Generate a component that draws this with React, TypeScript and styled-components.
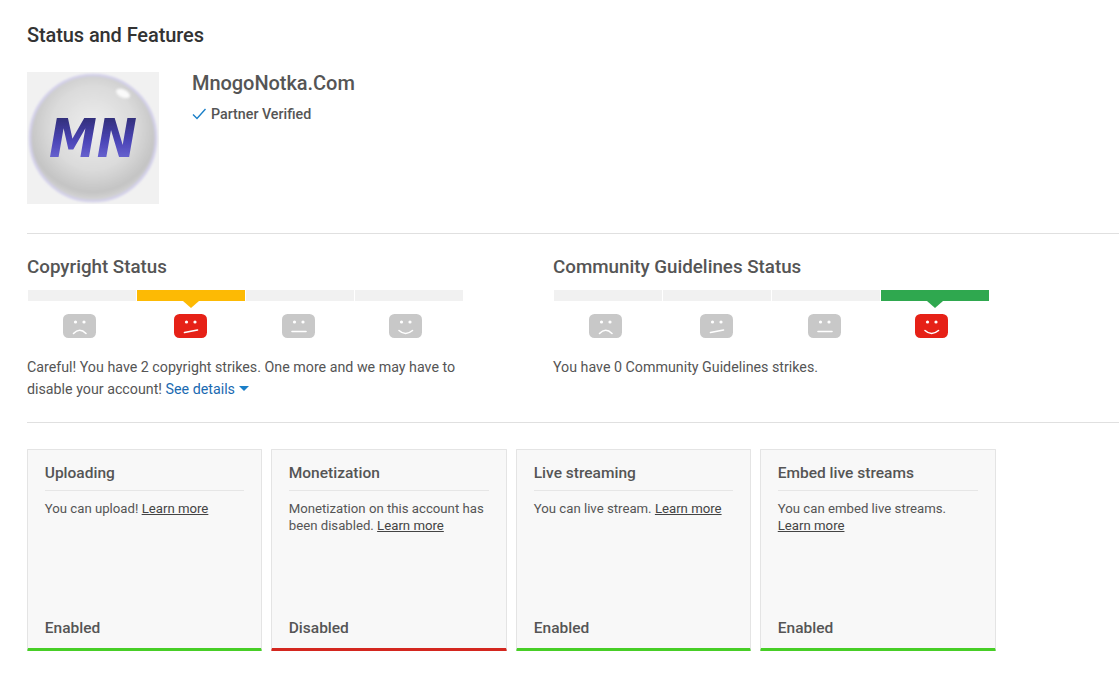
import React from "react";
import styled, { createGlobalStyle } from "styled-components";

const Global = createGlobalStyle`
  html, body { margin: 0; padding: 0; background: #fff; }
  body { font-family: Roboto, "Liberation Sans", sans-serif; color: #4d4d4d; overflow: hidden; }
`;

const Page = styled.div`
  width: 1119px;
  height: 675px;
  padding: 24px 0 0 27px;
  box-sizing: border-box;
  overflow: hidden;
`;
const PageTitle = styled.h1`
  margin: 0;
  font-size: 20px;
  line-height: 23px;
  font-weight: 500;
  letter-spacing: -0.1px;
  color: #333;
`;
const Profile = styled.div`
  display: flex;
  gap: 33px;
  margin-top: 25px;
  padding-bottom: 29px;
  border-bottom: 1px solid #e0e0e0;
`;
const Avatar = styled.div`
  width: 132px;
  height: 132px;
  background: #f1f1f1;
  flex: none;
`;
const ProfileInfo = styled.div`
  padding-top: 0;
`;
const ChannelName = styled.div`
  font-size: 20px;
  line-height: 23px;
  font-weight: 500;
  letter-spacing: -0.05px;
  color: #555;
`;
const Verified = styled.div`
  display: flex;
  align-items: center;
  gap: 5px;
  margin-top: 10px;
  font-size: 14.25px;
  line-height: 18px;
  font-weight: 500;
  color: #555;
`;
const StatusRow = styled.div`
  display: flex;
  height: 189px;
  padding-top: 21px;
  box-sizing: border-box;
  border-bottom: 1px solid #e0e0e0;
`;
const StatusBlock = styled.section`
  width: 526px;
  flex: none;
`;
const SectionTitle = styled.h2`
  margin: 0;
  font-size: 18.75px;
  line-height: 24px;
  font-weight: 500;
  color: #555;
`;
const Meter = styled.div`
  display: grid;
  grid-template-columns: repeat(4, 108px);
  column-gap: 1px;
  width: 436px;
  margin: 11px 0 0 1px;
`;
const Step = styled.div`
  display: flex;
  flex-direction: column;
  align-items: center;
`;
const Bar = styled.div<{ $color?: string }>`
  position: relative;
  align-self: stretch;
  height: 11px;
  background: ${(p) => p.$color ?? "#f1f1f1"};
  ${(p) =>
    p.$color
      ? `&::after {
    content: "";
    position: absolute;
    left: 50%;
    top: 11px;
    margin-left: -8px;
    border-left: 8px solid transparent;
    border-right: 8px solid transparent;
    border-top: 7px solid ${p.$color};
  }`
      : ""}
`;
const FaceWrap = styled.div<{ $inset: number }>`
  margin: 13px ${(p) => p.$inset}px 0 0;
  height: 25px;
  line-height: 0;
`;
const StatusText = styled.p`
  margin: 17px 0 0;
  width: 440px;
  font-size: 14.25px;
  line-height: 22px;
  color: #555;
`;
const DetailsLink = styled.a`
  color: #1a6ab1;
`;
const Caret = styled.span`
  display: inline-block;
  margin-left: 4px;
  vertical-align: 3px;
  border-left: 5px solid transparent;
  border-right: 5px solid transparent;
  border-top: 5px solid #1a7fc8;
`;
const Cards = styled.div`
  display: grid;
  grid-template-columns: 235px 236px 235px 236px;
  column-gap: 9px;
  margin-top: 26px;
`;
const Card = styled.article<{ $accent: string }>`
  height: 202px;
  box-sizing: border-box;
  display: flex;
  flex-direction: column;
  padding: 14px 17px 10px 16.75px;
  background: #f8f8f8;
  border: 1px solid #e4e4e4;
  border-bottom: 3px solid ${(p) => p.$accent};
  border-radius: 1px;
`;
const CardTitle = styled.h3`
  margin: 0;
  padding-bottom: 7px;
  font-size: 15.5px;
  line-height: 19px;
  font-weight: 500;
  color: #555;
  border-bottom: 1px solid #e6e6e6;
`;
const CardText = styled.p`
  margin: 9px 0 0;
  flex: 1;
  font-size: 13.2px;
  line-height: 17px;
  color: #555;
`;
const LearnMore = styled.a`
  color: #444;
  text-decoration: underline;
`;
const CardStatus = styled.div`
  font-size: 15.5px;
  line-height: 19px;
  font-weight: 500;
  color: #555;
`;

type Mood = "sad" | "meh" | "flat" | "happy";
const mouths: Record<Mood, string> = {
  sad: "M10.5 19.5 Q16.5 13 23 19.5",
  meh: "M10.5 18.5 L23.5 16",
  flat: "M10 17.5 L24 17.5",
  happy: "M10 16.5 Q16.5 22.5 23.5 16.5",
};
const Face = ({ mood, on }: { mood: Mood; on?: boolean }) => (
  <svg width="33" height="24" viewBox="0 0 33 24">
    <rect width="33" height="24" rx="5.5" fill={on ? "#e62117" : "#c8c8c8"} />
    <circle cx="12.5" cy="8" r="1.6" fill="#fff" />
    <circle cx="21" cy="8" r="1.6" fill="#fff" />
    <path d={mouths[mood]} fill="none" stroke="#fff" strokeWidth="1.6" strokeLinecap="round" />
  </svg>
);

const Logo = () => (
  <svg width="132" height="132" viewBox="0 0 132 132">
    <defs>
      <radialGradient id="ball" cx="50%" cy="42%" r="60%">
        <stop offset="0%" stopColor="#eeeeee" />
        <stop offset="55%" stopColor="#dbdbdb" />
        <stop offset="85%" stopColor="#c4c4c4" />
        <stop offset="100%" stopColor="#dcdcdc" />
      </radialGradient>
      <linearGradient id="mn" x1="0" y1="0" x2="0" y2="1">
        <stop offset="0%" stopColor="#26245f" />
        <stop offset="55%" stopColor="#4c46b8" />
        <stop offset="100%" stopColor="#7d78e0" />
      </linearGradient>
      <filter id="soft">
        <feGaussianBlur stdDeviation="0.8" />
      </filter>
      <filter id="softText">
        <feGaussianBlur stdDeviation="0.35" />
      </filter>
    </defs>
    <circle cx="66" cy="66" r="63" fill="url(#ball)" stroke="#d3d0ea" strokeWidth="2.5" filter="url(#soft)" />
    <ellipse cx="96" cy="21.5" rx="7.5" ry="4" transform="rotate(25 96 21.5)" fill="#fafafa" filter="url(#soft)" />
    <text x="66" y="85" textAnchor="middle" fontFamily="DejaVu Sans" fontWeight="700" fontStyle="italic" fontSize="54" textLength="88" lengthAdjust="spacingAndGlyphs" fill="url(#mn)" filter="url(#softText)">MN</text>
  </svg>
);

const Check = () => (
  <svg width="14" height="12" viewBox="0 0 14 12">
    <path d="M1 6.5 L5 10.5 L13.5 1" fill="none" stroke="#1a7fc8" strokeWidth="1.4" />
  </svg>
);

const meterSteps: { mood: Mood; inset: number }[] = [
  { mood: "sad", inset: 5 },
  { mood: "meh", inset: 1 },
  { mood: "flat", inset: 3 },
  { mood: "happy", inset: 7 },
];

const StatusMeter = ({ active, color }: { active: number; color: string }) => (
  <Meter>
    {meterSteps.map((s, i) => (
      <Step key={s.mood}>
        <Bar $color={i === active ? color : undefined} />
        <FaceWrap $inset={s.inset}>
          <Face mood={s.mood} on={i === active} />
        </FaceWrap>
      </Step>
    ))}
  </Meter>
);

const features = [
  { title: "Uploading", text: "You can upload! ", status: "Enabled", accent: "#47ce26" },
  { title: "Monetization", text: "Monetization on this account has been disabled. ", status: "Disabled", accent: "#d3271f" },
  { title: "Live streaming", text: "You can live stream. ", status: "Enabled", accent: "#47ce26" },
  { title: "Embed live streams", text: "You can embed live streams. ", status: "Enabled", accent: "#47ce26" },
];

export default function App() {
  return (
    <Page>
      <Global />
      <PageTitle>Status and Features</PageTitle>
      <Profile>
        <Avatar>
          <Logo />
        </Avatar>
        <ProfileInfo>
          <ChannelName>MnogoNotka.Com</ChannelName>
          <Verified>
            <Check />
            Partner Verified
          </Verified>
        </ProfileInfo>
      </Profile>
      <StatusRow>
        <StatusBlock>
          <SectionTitle>Copyright Status</SectionTitle>
          <StatusMeter active={1} color="#fdba04" />
          <StatusText>
            Careful! You have 2 copyright strikes. One more and we may have to disable your account!{" "}
            <DetailsLink>See details<Caret /></DetailsLink>
          </StatusText>
        </StatusBlock>
        <StatusBlock>
          <SectionTitle>Community Guidelines Status</SectionTitle>
          <StatusMeter active={3} color="#2fa84f" />
          <StatusText>You have 0 Community Guidelines strikes.</StatusText>
        </StatusBlock>
      </StatusRow>
      <Cards>
        {features.map((f) => (
          <Card key={f.title} $accent={f.accent}>
            <CardTitle>{f.title}</CardTitle>
            <CardText>
              {f.text}
              <LearnMore>Learn more</LearnMore>
            </CardText>
            <CardStatus>{f.status}</CardStatus>
          </Card>
        ))}
      </Cards>
    </Page>
  );
}
